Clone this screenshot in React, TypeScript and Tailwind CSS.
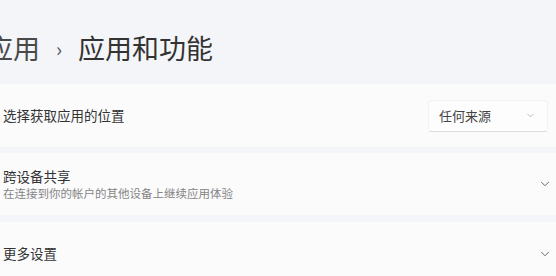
import { ChevronDown } from "lucide-react";

const font = { fontFamily: '"Noto Sans CJK SC", "Noto Sans", sans-serif' };

function Card({ children, className = "" }: { children: React.ReactNode; className?: string }) {
  return (
    <div
      className={`flex items-center justify-between bg-[#fbfbfc] rounded-md pl-[13px] pr-[6px] ${className}`}
    >
      {children}
    </div>
  );
}

export default function App() {
  return (
    <div className="w-[556px] h-[276px] overflow-hidden bg-[#f3f5f8]" style={font}>
      <div className="h-[84px] pt-[30px] flex items-start gap-[16px] -ml-[14px] text-[27px] leading-[36px] text-[#333]">
        <span className="text-[#4a4a4a]">应用</span>
        <span className="text-[20px] text-[#555] mt-[5px] leading-[28px]">›</span>
        <span>应用和功能</span>
      </div>
      <div className="-mx-[10px] flex flex-col gap-[6px]">
        <Card className="h-[63px]">
          <span className="text-[13.5px] text-[#333]">选择获取应用的位置</span>
          <div className="flex items-center justify-between w-[120px] h-[32px] mr-[12px] pl-[10px] pr-[11px] bg-[#fdfdfd] rounded-[4px] border border-[#f1f2f4] border-b-[#d9dbde]">
            <span className="text-[13px] text-[#444]">任何来源</span>
            <ChevronDown className="w-[11px] h-[11px] text-[#a0a0a0]" strokeWidth={1.5} />
          </div>
        </Card>
        <Card className="h-[62px]">
          <div className="flex flex-col">
            <span className="text-[13.5px] leading-[18px] text-[#333]">跨设备共享</span>
            <span className="text-[11.5px] leading-[16px] text-[#858585]">在连接到你的帐户的其他设备上继续应用体验</span>
          </div>
          <ChevronDown className="w-[14px] h-[14px] text-[#555] mr-[8px]" strokeWidth={1.5} />
        </Card>
        <Card className="h-[63px] mt-[1px]">
          <span className="text-[13.5px] text-[#333]">更多设置</span>
          <ChevronDown className="w-[14px] h-[14px] text-[#555] mr-[8px]" strokeWidth={1.5} />
        </Card>
      </div>
    </div>
  );
}
